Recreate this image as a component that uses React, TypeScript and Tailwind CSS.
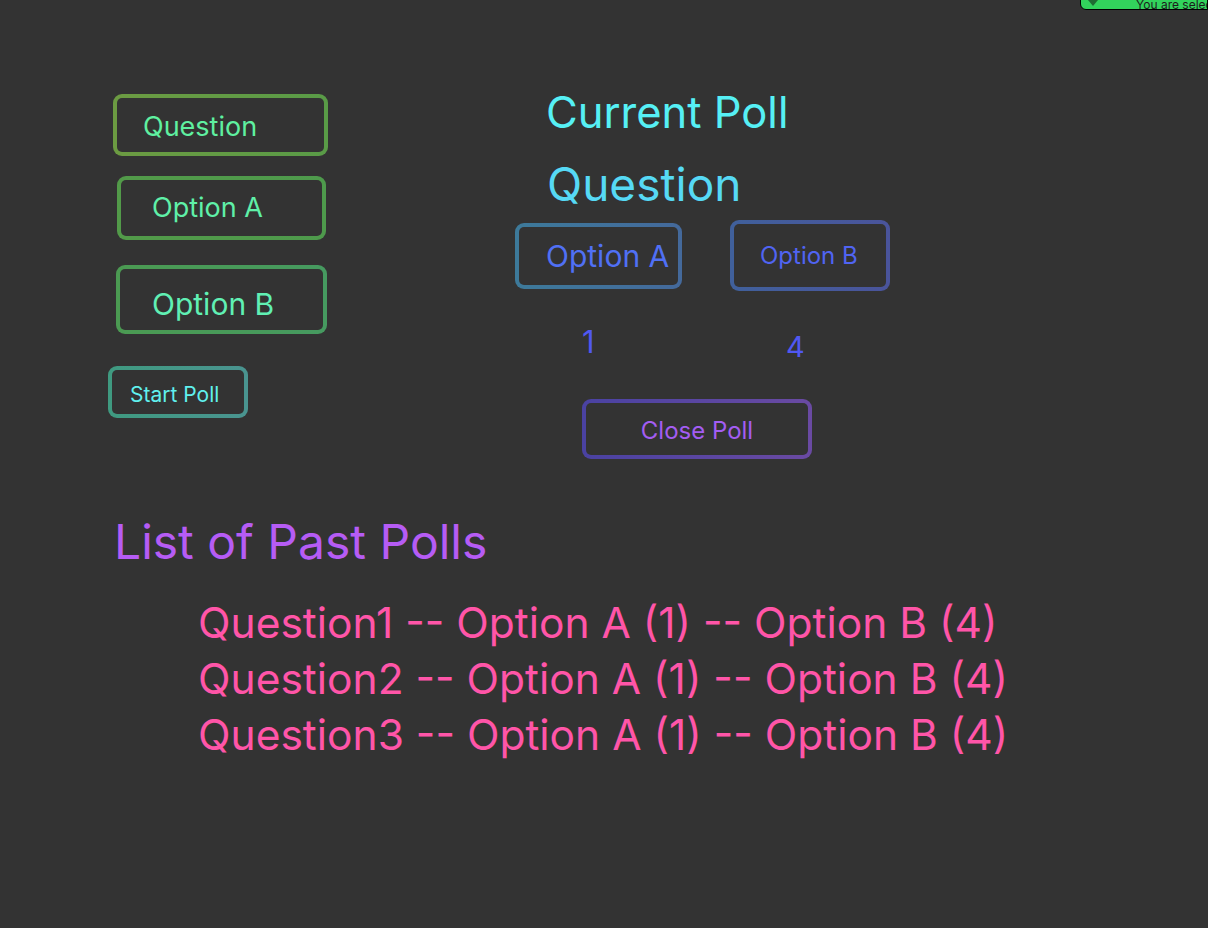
import React from "react";

const font = { fontFamily: "Inter, 'Noto Sans', sans-serif" };

const pastPolls = [
    { question: "Question1", a: 1, b: 4 },
    { question: "Question2", a: 1, b: 4 },
    { question: "Question3", a: 1, b: 4 },
];

export default function App() {
    return (
        <div
            className="relative min-h-[928px] w-full overflow-hidden bg-[#333333] text-white"
            style={font}
        >
            {/* selected badge, top right */}
            <div className="absolute -top-[12px] right-0 flex h-[22px] w-[128px] items-end overflow-hidden whitespace-nowrap rounded-bl-md border border-black bg-[#32d35c] pl-[7px]">
                <span className="mb-[3px] mr-[38px] h-0 w-0 border-x-[5px] border-t-[6px] border-x-transparent border-t-[#1f6b33]"></span>
                <span className="-mb-[2px] text-[12px] leading-none text-[#1d1d1d]">You are selected</span>
            </div>

            <div className="flex pt-[94px]">
                {/* create poll */}
                <div className="ml-[108px] flex w-[240px] flex-col">
                    <div className="ml-[5px] flex h-[62px] w-[215px] items-center rounded-[9px] border-4 border-transparent pl-[26px] pt-[4px] [background:linear-gradient(#333333,#333333)_padding-box,linear-gradient(90deg,#6c9b42,#599b47)_border-box]">
                        <span className="text-[27px] text-[#5ff0a0]">Question</span>
                    </div>
                    <div className="ml-[9px] mt-[20px] flex h-[64px] w-[209px] items-center rounded-[9px] border-4 border-transparent pl-[31px] [background:linear-gradient(#333333,#333333)_padding-box,linear-gradient(90deg,#529a49,#4e9a4c)_border-box]">
                        <span className="text-[27px] text-[#5ff0a8]">Option A</span>
                    </div>
                    <div className="ml-[8px] mt-[25px] flex h-[69px] w-[211px] items-end rounded-[9px] border-4 border-transparent pb-[3px] pl-[32px] [background:linear-gradient(#333333,#333333)_padding-box,linear-gradient(90deg,#4b9a52,#469a60)_border-box]">
                        <span className="text-[30px] text-[#60f0b4]">Option B</span>
                    </div>
                    <div className="mt-[32px] flex h-[52px] w-[140px] items-center rounded-[9px] border-4 border-transparent pl-[18px] pt-[6px] [background:linear-gradient(#333333,#333333)_padding-box,linear-gradient(90deg,#3f9a80,#4a9490)_border-box]">
                        <span className="text-[21px] text-[#60f0ee]">Start Poll</span>
                    </div>
                </div>

                {/* current poll */}
                <div className="ml-[167px] flex flex-col">
                    <div className="ml-[31px] -mt-[10px] text-[43.5px] leading-[56px] text-[#56f0f5]">
                        Current Poll
                    </div>
                    <div className="ml-[32px] mt-[16px] text-[46px] leading-[56px] text-[#56d9f5]">
                        Question
                    </div>
                    <div className="mt-[9px] flex items-start">
                        <div className="flex flex-col items-start">
                            <div className="mt-[2px] flex h-[66px] w-[167px] items-center rounded-[9px] border-4 border-transparent pl-[27px] [background:linear-gradient(#333333,#333333)_padding-box,linear-gradient(90deg,#3d7a9a,#44699b)_border-box]">
                                <span className="text-[30px] text-[#5070f5]">Option A</span>
                            </div>
                            <span className="ml-[67px] mt-[37px] text-[31px] leading-none text-[#5058f2]">1</span>
                        </div>
                        <div className="ml-[48px] flex flex-col items-start">
                            <div className="-mt-[1px] flex h-[71px] w-[160px] items-center rounded-[9px] border-4 border-transparent pl-[26px] [background:linear-gradient(#333333,#333333)_padding-box,linear-gradient(90deg,#40609b,#4a549b)_border-box]">
                                <span className="text-[24px] text-[#5064f2]">Option B</span>
                            </div>
                            <span className="ml-[56px] mt-[41px] text-[29px] leading-none text-[#5058f2]">4</span>
                        </div>
                    </div>
                    <div className="ml-[67px] mt-[38px] flex h-[60px] w-[230px] items-center justify-center rounded-[9px] border-4 border-transparent pt-[4px] [background:linear-gradient(#333333,#333333)_padding-box,linear-gradient(90deg,#4a42a2,#6a4aa2)_border-box]">
                        <span className="text-[24px] text-[#a35df2]">Close Poll</span>
                    </div>
                </div>
            </div>

            {/* past polls */}
            <div className="ml-[114px] mt-[53px] text-[48px] leading-[60px] text-[#b65cf5]">
                List of Past Polls
            </div>
            <div className="ml-[198px] mt-[23px] flex flex-col">
                {pastPolls.map((poll) => (
                    <div key={poll.question} className="text-[42.5px] leading-[56px] text-[#ff55a8]">
                        {poll.question} -- Option A ({poll.a}) -- Option B ({poll.b})
                    </div>
                ))}
            </div>
        </div>
    );
}
